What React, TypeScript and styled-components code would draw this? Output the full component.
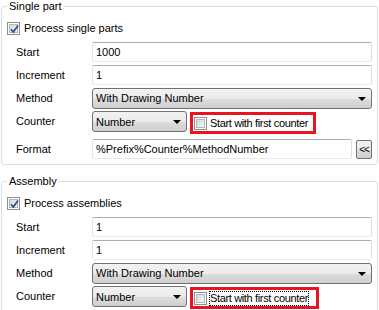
import React from 'react';
import styled, { createGlobalStyle } from 'styled-components';

const GlobalStyle = createGlobalStyle`
  body {
    margin: 0;
    background: #fff;
    font-family: "Liberation Sans", Arial, sans-serif;
    font-size: 11px;
    color: #000;
  }
`;

const Page = styled.div`
  width: 379px;
  height: 310px;
  overflow: hidden;
  box-sizing: border-box;
  padding: 0 1px 0 1px;
  display: flex;
  flex-direction: column;
  gap: 10px;
`;

const Group = styled.fieldset`
  margin: 0;
  min-width: 0;
  padding: 8px 5px 5px 5px;
  border: 1px solid #d5dfe5;
  border-radius: 3px;
`;

const Legend = styled.legend`
  padding: 0 2px;
  line-height: 13px;
`;

const CheckLine = styled.label`
  display: flex;
  align-items: center;
  gap: 4px;
  height: 14px;
`;

const Box = styled.span`
  position: relative;
  width: 13px;
  height: 13px;
  box-sizing: border-box;
  border: 1px solid #8e8f8f;
  background: #fff;
  flex: none;
  display: inline-block;

  &::before {
    content: '';
    position: absolute;
    left: 1px;
    top: 1px;
    width: 9px;
    height: 9px;
    box-sizing: border-box;
    border: 1px solid #b4b8bc;
    background: linear-gradient(135deg, #d6d8da 0%, #f6f6f6 100%);
  }

  svg {
    position: absolute;
    left: 0;
    top: 0;
  }
`;

const Rows = styled.div`
  display: flex;
  flex-direction: column;
  gap: 3px;
  margin: 7px 0 0 9px;
`;

const Row = styled.div<{ $tall?: boolean }>`
  display: flex;
  align-items: ${(p) => (p.$tall ? 'flex-start' : 'center')};
  height: ${(p) => (p.$tall ? 25 : 20)}px;
`;

const Label = styled.span<{ $combo?: boolean }>`
  width: 76px;
  flex: none;
  line-height: ${(p) => (p.$combo ? '21px' : 'normal')};
`;

const TextBox = styled.div`
  flex: 1;
  height: 20px;
  box-sizing: border-box;
  border: 1px solid;
  border-color: #abadb3 #dbdfe6 #e3e9ef #e2e3ea;
  border-radius: 2px;
  padding-left: 3px;
  display: flex;
  align-items: center;
  white-space: nowrap;
  overflow: hidden;
`;

const Combo = styled.div<{ $width?: number }>`
  position: relative;
  ${(p) => (p.$width ? `width: ${p.$width}px; flex: none;` : 'flex: 1;')}
  height: 21px;
  box-sizing: border-box;
  border: 1px solid #707070;
  border-radius: 3px;
  background: linear-gradient(#f2f2f2 0%, #ebebeb 50%, #dddddd 51%, #cfcfcf 100%);
  padding-left: 3px;
  display: flex;
  align-items: center;

  &::after {
    content: '';
    position: absolute;
    right: 5px;
    top: 8px;
    border-left: 4px solid transparent;
    border-right: 4px solid transparent;
    border-top: 4px solid #000;
  }
`;

const Marked = styled.div<{ $wide?: boolean }>`
  margin: 1px 0 0 3px;
  width: ${(p) => (p.$wide ? 129 : 126)}px;
  height: 22px;
  box-sizing: border-box;
  border: 3px solid #e8141f;
  display: flex;
  align-items: center;
  gap: 3px;
  padding-left: 1px;
  flex: none;
`;

const Caption = styled.span<{ $focus?: boolean }>`
  line-height: 13px;
  white-space: nowrap;
  letter-spacing: -0.35px;
  outline: ${(p) => (p.$focus ? '1px dotted #000' : 'none')};
  outline-offset: 0;
`;

const SmallButton = styled.div`
  margin-left: 4px;
  width: 16px;
  height: 19px;
  box-sizing: border-box;
  border: 1px solid #707070;
  border-radius: 2px;
  background: linear-gradient(#f2f2f2 0%, #ebebeb 50%, #dddddd 51%, #cfcfcf 100%);
  display: flex;
  align-items: center;
  justify-content: center;
  font-size: 10px;
  letter-spacing: -1px;
  flex: none;
`;

const Check = ({ checked }: { checked?: boolean }) => (
  <Box>
    {checked && (
      <svg width="13" height="13" viewBox="0 0 13 13">
        <path d="M3 6.2 L5.3 9 L10 2.5" fill="none" stroke="#3a4d8f" strokeWidth="1.8" />
      </svg>
    )}
  </Box>
);

type SectionProps = {
  title: string;
  processLabel: string;
  start: string;
  focus?: boolean;
  withFormat?: boolean;
};

const Section = ({ title, processLabel, start, focus, withFormat }: SectionProps) => (
  <Group>
    <Legend>{title}</Legend>
    <CheckLine>
      <Check checked />
      <span>{processLabel}</span>
    </CheckLine>
    <Rows>
      <Row>
        <Label>Start</Label>
        <TextBox>{start}</TextBox>
      </Row>
      <Row>
        <Label>Increment</Label>
        <TextBox>1</TextBox>
      </Row>
      <Row>
        <Label>Method</Label>
        <Combo>With Drawing Number</Combo>
      </Row>
      <Row $tall>
        <Label $combo>Counter</Label>
        <Combo $width={95}>Number</Combo>
        <Marked $wide={focus}>
          <Check />
          <Caption $focus={focus}>Start with first counter</Caption>
        </Marked>
      </Row>
      {withFormat && (
        <Row>
          <Label>Format</Label>
          <TextBox>%Prefix%Counter%MethodNumber</TextBox>
          <SmallButton>&lt;&lt;</SmallButton>
        </Row>
      )}
    </Rows>
  </Group>
);

export default function App() {
  return (
    <>
      <GlobalStyle />
      <Page>
        <Section title="Single part" processLabel="Process single parts" start="1000" withFormat />
        <Section title="Assembly" processLabel="Process assemblies" start="1" focus />
      </Page>
    </>
  );
}
